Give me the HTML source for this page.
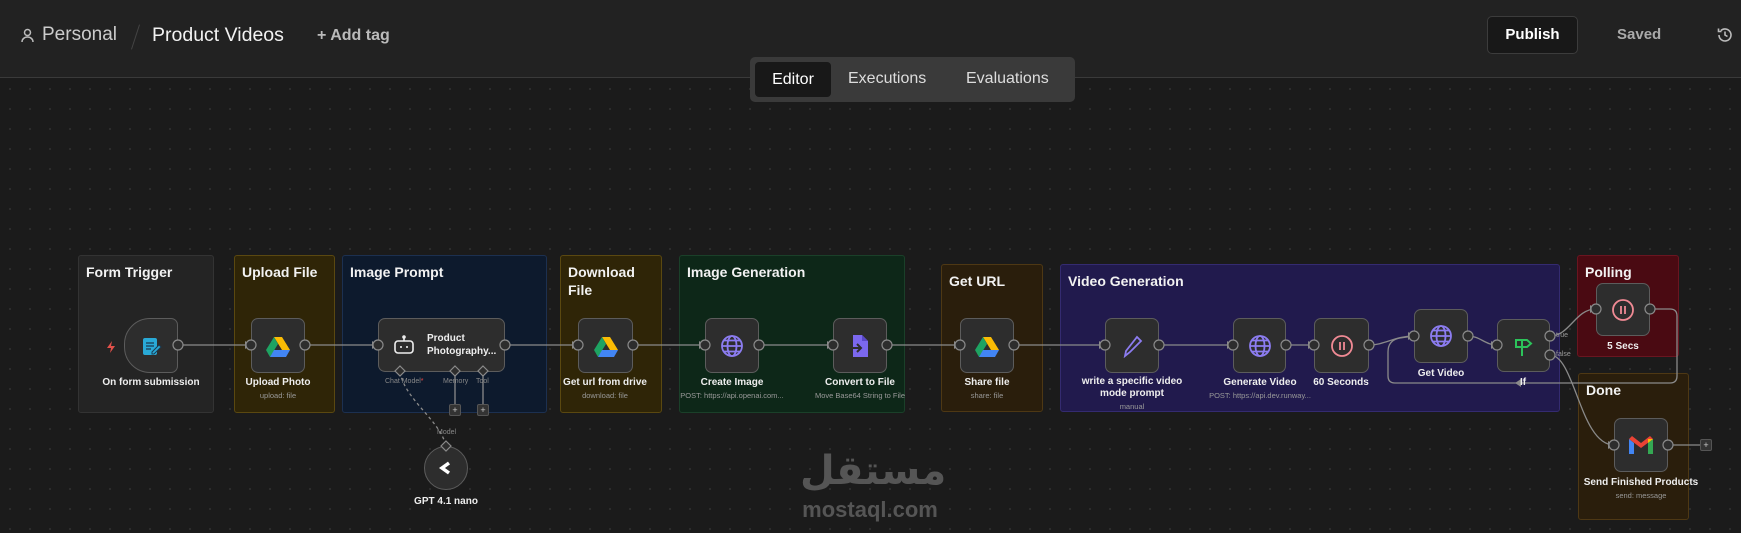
<!DOCTYPE html>
<html><head><meta charset="utf-8"><style>
*{box-sizing:border-box;margin:0;padding:0}
body{width:1741px;height:533px;overflow:hidden;background:#1b1b1b;font-family:"Liberation Sans",sans-serif;color:#e6e6e6;position:relative}
#hdr{position:absolute;left:0;top:0;width:1741px;height:78px;background:#222;border-bottom:1px solid #3a3a3a}
#canvas{position:absolute;left:0;top:79px;width:1741px;height:454px;background-color:#1b1b1b;background-image:radial-gradient(#2e2e2e 1px,transparent 1.2px);background-size:20px 20px}
.a{position:absolute}
.g{position:absolute;border-radius:3px;border:1px solid}
.g .t{position:absolute;left:7px;top:7px;font-weight:bold;font-size:14px;color:#f2f2f2;line-height:18px}
.n{position:absolute;background:#2d2d2d;border:1px solid #5c5c5c;border-radius:7px;display:flex;align-items:center;justify-content:center}
.lb{position:absolute;font-size:10px;font-weight:bold;color:#eee;text-align:center;width:160px;line-height:13px}
.sb{position:absolute;font-size:7.5px;color:#999;text-align:center;width:160px}
</style></head><body>
<div id="hdr">
 <div class="a" style="left:21px;top:28px"><svg width="13" height="15" viewBox="0 0 13 15" fill="none" stroke="#bbb" stroke-width="1.5"><circle cx="6.5" cy="4.5" r="3"/><path d="M1 14c0-3 2.5-5 5.5-5s5.5 2 5.5 5"/></svg></div>
 <div class="a" style="left:42px;top:24px;font-size:19px;color:#ccc">Personal</div>
 <div class="a" style="left:135px;top:24px;width:1px;height:26px;background:#444;transform:rotate(18deg)"></div>
 <div class="a" style="left:152px;top:24px;font-size:19.5px;color:#f2f2f2">Product Videos</div>
 <div class="a" style="left:317px;top:27px;font-size:16px;color:#bbb;font-weight:bold">+ Add tag</div>
 <div class="a" style="left:1487px;top:16px;width:91px;height:38px;background:#181818;border:1px solid #3c3c3c;border-radius:5px;font-size:15px;font-weight:bold;color:#fff;text-align:center;line-height:36px">Publish</div>
 <div class="a" style="left:1617px;top:26px;font-size:15px;font-weight:bold;color:#aaa">Saved</div>
 <div class="a" style="left:1716px;top:26px"><svg width="18" height="18" viewBox="0 0 18 18" fill="none" stroke="#bbb" stroke-width="1.6"><path d="M3 9a6 6 0 1 0 1.8-4.3"/><path d="M2.5 2.5v3h3"/><path d="M9 5.5V9l2.5 1.5"/></svg></div>
</div>
<div id="canvas"></div>
<div class="a" style="left:750px;top:57px;width:325px;height:45px;background:#3a3a3a;border-radius:5px"></div>
<div class="a" style="left:755px;top:62px;width:76px;height:35px;background:#181818;border-radius:4px;font-size:16px;color:#fff;text-align:center;line-height:35px">Editor</div>
<div class="a" style="left:848px;top:70px;font-size:16px;color:#ddd">Executions</div>
<div class="a" style="left:966px;top:70px;font-size:16px;color:#ddd">Evaluations</div>

<div class="g" style="left:78px;top:255px;width:136px;height:158px;background:#242424;border-color:#333"><div class="t">Form Trigger</div></div>
<div class="g" style="left:234px;top:255px;width:101px;height:158px;background:#2f2507;border-color:#5a4810"><div class="t">Upload File</div></div>
<div class="g" style="left:342px;top:255px;width:205px;height:158px;background:#0d1a2d;border-color:#1c3050"><div class="t">Image Prompt</div></div>
<div class="g" style="left:560px;top:255px;width:102px;height:158px;background:#2f2507;border-color:#5a4810"><div class="t">Download<br>File</div></div>
<div class="g" style="left:679px;top:255px;width:226px;height:158px;background:#0d2718;border-color:#1a4029"><div class="t">Image Generation</div></div>
<div class="g" style="left:941px;top:264px;width:102px;height:148px;background:#2a1e0c;border-color:#4e3814"><div class="t">Get URL</div></div>
<div class="g" style="left:1060px;top:264px;width:500px;height:148px;background:#211a4d;border-color:#342b70"><div class="t">Video Generation</div></div>
<div class="g" style="left:1577px;top:255px;width:102px;height:102px;background:#4a0a12;border-color:#6a1520"><div class="t">Polling</div></div>
<div class="g" style="left:1578px;top:373px;width:111px;height:147px;background:#2a1e0c;border-color:#4e3814"><div class="t">Done</div></div>

<div class="a" style="left:800px;top:446px;width:140px;text-align:center;font-family:'DejaVu Sans','Noto Sans CJK SC',sans-serif;font-size:40px;font-weight:bold;color:#555;line-height:50px">مستقل</div>
<div class="a" style="left:800px;top:497px;width:140px;text-align:center;font-size:22px;color:#555;font-weight:bold">mostaql.com</div>

<svg class="a" style="left:0;top:0" width="1741" height="533" fill="none" stroke="#8a8a8a" stroke-width="1.3">
<path d="M178 345H251M305 345H378M505 345H578M633 345H705M759 345H833M887 345H960M1014 345H1105M1159 345H1233M1286 345H1314"/>
<path d="M1369 345C1385 345 1395 336 1414 336M1468 336C1480 336 1485 345 1497 345"/>
<path d="M1550 336C1570 336 1575 309 1596 309"/>
<path d="M1550 355C1575 355 1580 445 1614 445"/>
<path d="M1650 309H1670Q1677 309 1677 316V376Q1677 383 1670 383H1395Q1388 383 1388 376V352Q1388 340 1400 338L1414 336"/>
<path d="M1668 445H1700"/>
<path d="M455 372V408M483 372V408"/>
<path d="M400 372C405 400 440 420 446 446" stroke-dasharray="3 3"/>
<g fill="#8a8a8a" stroke="none">
<path d="M251 345l-6-4v8zM378 345l-6-4v8zM578 345l-6-4v8zM705 345l-6-4v8zM833 345l-6-4v8zM960 345l-6-4v8zM1105 345l-6-4v8zM1233 345l-6-4v8zM1314 345l-6-4v8zM1414 336l-6-4v8zM1497 345l-6-4v8zM1596 309l-6-4v8zM1614 445l-6-4v8zM1515 383l6-4v8z"/>
</g>
</svg>

<div class="n" style="left:124px;top:318px;width:54px;height:55px;border-radius:26px 7px 7px 26px"><svg width="22" height="22" viewBox="0 0 22 22"><rect x="3" y="3" width="14" height="17" rx="2" fill="#29a9d6"/><path d="M6 8h8M6 11h8M6 14h5" stroke="#1b3a50" stroke-width="1.3"/><path d="M12 17l7-7 2 2-7 7h-2z" fill="#29a9d6" stroke="#1b3a50"/></svg></div>
<div class="a" style="left:106px;top:340px"><svg width="10" height="12" viewBox="0 0 10 12"><path d="M6 0L1 7h4l-1 5 5-7H5z" fill="#e2514a"/></svg></div>
<div class="lb" style="left:71px;top:376px">On form submission</div>

<svg width="0" height="0" style="position:absolute"><defs>
<g id="gd"><path d="M8 2h8l8 13h-8z" fill="#fbbc04"/><path d="M8 2L0 15l4 7 8-13z" fill="#1ea362"/><path d="M4 22h16l4-7H8z" fill="#4285f4"/></g>
<g id="gl" fill="none" stroke="#8c7cf0" stroke-width="1.8"><circle cx="12" cy="12" r="10"/><ellipse cx="12" cy="12" rx="4.5" ry="10"/><path d="M2 12h20M4 6.5h16M4 17.5h16"/></g>
<g id="ps" fill="none" stroke="#f08a94" stroke-width="1.8"><circle cx="12" cy="12" r="10"/><path d="M10 8v8M14 8v8"/></g>
</defs></svg>

<div class="n" style="left:251px;top:318px;width:54px;height:55px"><svg width="24" height="22" viewBox="0 0 24 22"><use href="#gd"/></svg></div>
<div class="lb" style="left:198px;top:376px">Upload Photo</div><div class="sb" style="left:198px;top:391px">upload: file</div>

<div class="n" style="left:378px;top:318px;width:127px;height:54px;justify-content:flex-start;padding-left:14px"><svg width="22" height="20" viewBox="0 0 22 20" fill="none" stroke="#eee" stroke-width="1.6"><rect x="2" y="6" width="18" height="12" rx="3"/><path d="M11 6V2"/><circle cx="11" cy="2" r="1"/><path d="M8 11v2M14 11v2"/></svg><div style="margin-left:12px;font-size:10px;font-weight:bold;line-height:13px;color:#eee">Product<br>Photography...</div></div>
<div class="a" style="left:385px;top:378px;font-size:7px;color:#888">Chat Model<span style="color:#e44">*</span></div>
<div class="a" style="left:443px;top:378px;font-size:7px;color:#888">Memory</div>
<div class="a" style="left:476px;top:378px;font-size:7px;color:#888">Tool</div>
<div class="a" style="left:449px;top:404px;width:12px;height:12px;background:#333;border:1px solid #555;border-radius:2px;font-size:9px;line-height:10px;text-align:center;color:#ccc">+</div>
<div class="a" style="left:477px;top:404px;width:12px;height:12px;background:#333;border:1px solid #555;border-radius:2px;font-size:9px;line-height:10px;text-align:center;color:#ccc">+</div>
<div class="a" style="left:437px;top:429px;font-size:7px;color:#888">Model</div>
<div class="a" style="left:424px;top:446px;width:44px;height:44px;border-radius:50%;background:#2d2d2d;border:1px solid #5c5c5c;display:flex;align-items:center;justify-content:center"><svg width="20" height="16" viewBox="0 0 20 16"><path d="M13 3L6 8l7 5" fill="none" stroke="#fff" stroke-width="3.5"/></svg></div>
<div class="lb" style="left:366px;top:495px">GPT 4.1 nano</div>

<div class="n" style="left:578px;top:318px;width:55px;height:55px"><svg width="24" height="22" viewBox="0 0 24 22"><use href="#gd"/></svg></div>
<div class="lb" style="left:525px;top:376px">Get url from drive</div><div class="sb" style="left:525px;top:391px">download: file</div>

<div class="n" style="left:705px;top:318px;width:54px;height:55px"><svg width="24" height="24" viewBox="0 0 24 24"><use href="#gl"/></svg></div>
<div class="lb" style="left:652px;top:376px">Create Image</div><div class="sb" style="left:652px;top:391px">POST: https://api.openai.com...</div>

<div class="n" style="left:833px;top:318px;width:54px;height:55px"><svg width="20" height="24" viewBox="0 0 20 24"><path d="M3 1h9l6 6v16H3z" fill="#7b68ee"/><path d="M12 1v6h6" fill="#5a48c8"/><path d="M0 14h10M7 10l4 4-4 4" stroke="#2d2d2d" stroke-width="2" fill="none"/></svg></div>
<div class="lb" style="left:780px;top:376px">Convert to File</div><div class="sb" style="left:780px;top:391px">Move Base64 String to File</div>

<div class="n" style="left:960px;top:318px;width:54px;height:55px"><svg width="24" height="22" viewBox="0 0 24 22"><use href="#gd"/></svg></div>
<div class="lb" style="left:907px;top:376px">Share file</div><div class="sb" style="left:907px;top:391px">share: file</div>

<div class="n" style="left:1105px;top:318px;width:54px;height:55px"><svg width="24" height="24" viewBox="0 0 24 24" fill="none" stroke="#8c7cf0" stroke-width="1.8"><path d="M5 22l1-5L17 3l4 4L10 18z"/></svg></div>
<div class="lb" style="left:1052px;top:376px;line-height:12px">write a specific video<br>mode prompt</div><div class="sb" style="left:1052px;top:402px">manual</div>

<div class="n" style="left:1233px;top:318px;width:53px;height:55px"><svg width="24" height="24" viewBox="0 0 24 24"><use href="#gl"/></svg></div>
<div class="lb" style="left:1180px;top:376px">Generate Video</div><div class="sb" style="left:1180px;top:391px">POST: https://api.dev.runway...</div>

<div class="n" style="left:1314px;top:318px;width:55px;height:55px"><svg width="24" height="24" viewBox="0 0 24 24"><use href="#ps"/></svg></div>
<div class="lb" style="left:1261px;top:376px">60 Seconds</div>

<div class="n" style="left:1414px;top:309px;width:54px;height:54px"><svg width="24" height="24" viewBox="0 0 24 24"><use href="#gl"/></svg></div>
<div class="lb" style="left:1361px;top:367px">Get Video</div>

<div class="n" style="left:1497px;top:319px;width:53px;height:53px"><svg width="22" height="22" viewBox="0 0 22 22" fill="none" stroke="#2cc35a" stroke-width="2"><path d="M9 21V4M3 5h11l4 3.5-4 3.5H3z"/></svg></div>
<div class="lb" style="left:1443px;top:376px">If</div>
<div class="a" style="left:1556px;top:332px;font-size:7px;color:#999">true</div>
<div class="a" style="left:1556px;top:351px;font-size:7px;color:#999">false</div>

<div class="n" style="left:1596px;top:283px;width:54px;height:53px"><svg width="24" height="24" viewBox="0 0 24 24"><use href="#ps"/></svg></div>
<div class="lb" style="left:1543px;top:340px">5 Secs</div>

<div class="n" style="left:1614px;top:418px;width:54px;height:54px"><svg width="24" height="18" viewBox="0 0 24 18"><path d="M0 3v15h5V7z" fill="#4285f4"/><path d="M19 7v11h5V3z" fill="#34a853"/><path d="M0 3l12 9 12-9-3-3-9 7-9-7z" fill="#ea4335"/><path d="M19 3l5 0v0l-5 4z" fill="#fbbc04"/></svg></div>
<div class="lb" style="left:1561px;top:476px">Send Finished Products</div><div class="sb" style="left:1561px;top:491px">send: message</div>
<div class="a" style="left:1700px;top:439px;width:12px;height:12px;background:#333;border:1px solid #555;border-radius:2px;font-size:9px;line-height:10px;text-align:center;color:#ccc">+</div>

<svg class="a" style="left:0;top:0" width="1741" height="533" fill="#2d2d2d" stroke="#8a8a8a" stroke-width="1.2">
<circle cx="178" cy="345" r="5"/><circle cx="251" cy="345" r="5"/><circle cx="305" cy="345" r="5"/><circle cx="378" cy="345" r="5"/><circle cx="505" cy="345" r="5"/><circle cx="578" cy="345" r="5"/><circle cx="633" cy="345" r="5"/><circle cx="705" cy="345" r="5"/><circle cx="759" cy="345" r="5"/><circle cx="833" cy="345" r="5"/><circle cx="887" cy="345" r="5"/><circle cx="960" cy="345" r="5"/><circle cx="1014" cy="345" r="5"/><circle cx="1105" cy="345" r="5"/><circle cx="1159" cy="345" r="5"/><circle cx="1233" cy="345" r="5"/><circle cx="1286" cy="345" r="5"/><circle cx="1314" cy="345" r="5"/><circle cx="1369" cy="345" r="5"/><circle cx="1414" cy="336" r="5"/><circle cx="1468" cy="336" r="5"/><circle cx="1497" cy="345" r="5"/><circle cx="1550" cy="336" r="5"/><circle cx="1550" cy="355" r="5"/><circle cx="1596" cy="309" r="5"/><circle cx="1650" cy="309" r="5"/><circle cx="1614" cy="445" r="5"/><circle cx="1668" cy="445" r="5"/>
<path d="M400 366l5 5-5 5-5-5zM455 366l5 5-5 5-5-5zM483 366l5 5-5 5-5-5zM446 441l5 5-5 5-5-5z"/>
</svg>
</body></html>
